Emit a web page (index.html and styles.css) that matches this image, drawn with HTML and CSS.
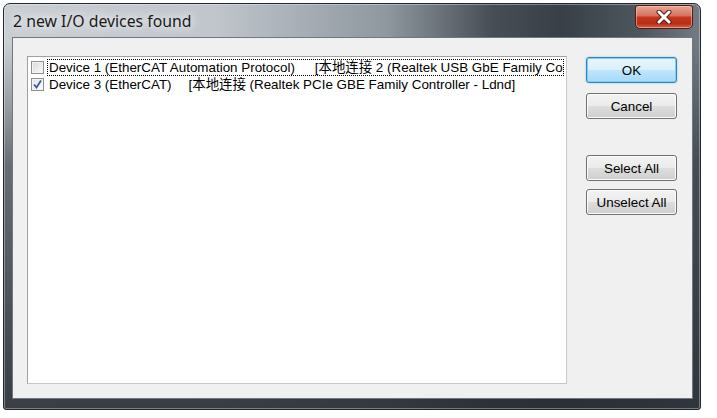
FILE: index.html
```html
<!DOCTYPE html>
<html lang="en">
<head>
    <meta charset="UTF-8">
    <title>2 new I/O devices found</title>
    <link rel="stylesheet" href="styles.css">
</head>
<body>
    <div class="window">
        <div class="titlebar">
            <span class="title">2 new I/O devices found</span>
            <button class="close" title="Close">
                <svg width="16" height="14" viewBox="0 0 16 14">
                    <path d="M3 2 L13 12 M13 2 L3 12" stroke="#5a1c12" stroke-width="5" stroke-linecap="round"/>
                    <path d="M3 2 L13 12 M13 2 L3 12" stroke="#ffffff" stroke-width="3" stroke-linecap="round"/>
                </svg>
            </button>
        </div>

        <div class="client">
            <div class="listbox">
                <div class="item">
                    <span class="check"></span>
                    <span class="label focused">
                        <span class="name">Device 1 (EtherCAT Automation Protocol)</span><span class="adapter">[本地连接 2 (Realtek USB GbE Family Controller)]</span>
                    </span>
                </div>
                <div class="item">
                    <span class="check checked">
                        <svg width="9" height="9" viewBox="0 0 9 9">
                            <path d="M1 4.5 L3.5 7.5 L8 0.5" fill="none" stroke="#3c5a9a" stroke-width="1.8"/>
                        </svg>
                    </span>
                    <span class="label">
                        <span class="name">Device 3 (EtherCAT)</span><span class="adapter short">[本地连接 (Realtek PCIe GBE Family Controller - Ldnd]</span>
                    </span>
                </div>
            </div>

            <div class="buttons">
                <button class="btn default">OK</button>
                <button class="btn cancel">Cancel</button>
                <button class="btn select">Select All</button>
                <button class="btn unselect">Unselect All</button>
            </div>
        </div>
    </div>
</body>
</html>
```

FILE: styles.css
```css
body {
    margin: 0;
    background-color: white;
    font-family: "Liberation Sans", Arial, "Noto Sans CJK SC", sans-serif;
}

.window {
    box-sizing: border-box;
    width: 698px;
    height: 407px;
    margin: 3px;
    padding: 0 7px 10px 8px;
    display: flex;
    flex-direction: column;
    border: 1px solid #20262c;
    border-radius: 7px 7px 3px 3px;
    background:
        linear-gradient(to bottom, rgba(40, 46, 52, 0) 0, rgba(40, 46, 52, 0) 40px, rgba(40, 46, 52, 0.6) 160px, rgba(40, 46, 52, 0.9) 100%),
        linear-gradient(to right, #c9ced3 0%, #c0c6cc 30%, #8f979f 55%, #474e56 70%, #383f46 80%, #4f5860 92%, #737c84 100%);
    box-shadow: inset 0 0 0 1px rgba(255, 255, 255, 0.35);
}

/* Title bar */
.titlebar {
    height: 33px;
    display: flex;
    justify-content: space-between;
    align-items: flex-start;
}

.title {
    margin: 6px 0 0 1px;
    font-family: "Noto Sans", "Open Sans", sans-serif;
    font-size: 15.8px;
    color: #1a1a1a;
    text-shadow: 0 0 8px #ffffff, 0 0 14px rgba(255, 255, 255, 0.9);
}

.close {
    width: 58px;
    height: 24px;
    margin-top: 1px;
    padding: 0;
    display: flex;
    align-items: center;
    justify-content: center;
    border: 1px solid #4a1d16;
    border-radius: 3px 3px 5px 5px;
    background: linear-gradient(to bottom, #e8a594 0%, #d8715f 45%, #c5381e 50%, #b82d15 80%, #d8604a 100%);
    box-shadow: inset 0 0 0 1px rgba(255, 210, 200, 0.5);
}

/* Client area */
.client {
    flex: 1;
    display: flex;
    align-items: flex-start;
    padding: 18px 0 0 14px;
    border: 1px solid #6f7882;
    background-color: #f0f0f0;
}

.listbox {
    box-sizing: border-box;
    width: 540px;
    height: 328px;
    padding: 2px 2px 0 3px;
    border: 1px solid #a0a0a0;
    border-right-color: #c8c8c8;
    border-bottom-color: #c8c8c8;
    background-color: white;
    overflow: hidden;
    font-size: 13.4px;
}

.item {
    height: 17px;
    display: flex;
    align-items: center;
    white-space: nowrap;
}

.check {
    box-sizing: border-box;
    flex: none;
    width: 13px;
    height: 13px;
    display: flex;
    align-items: center;
    justify-content: center;
    border: 1px solid #8e8f8f;
    background: linear-gradient(135deg, #d6d6d6 0%, #e9e9e9 50%, #fafafa 100%);
    box-shadow: inset 0 0 0 1px #f4f4f4;
}

.check.checked {
    background: linear-gradient(135deg, #dfe4ee 0%, #f1f3f7 60%, #ffffff 100%);
}

.label {
    flex: 1;
    height: 17px;
    box-sizing: border-box;
    margin-left: 3px;
    padding: 0 0 0 1px;
    border: 1px solid transparent;
    overflow: hidden;
    line-height: 15px;
    color: #000;
}

.label.focused {
    border: 1px dotted #000;
}

.adapter {
    margin-left: 20px;
}

.adapter.short {
    margin-left: 17px;
}

/* Buttons */
.buttons {
    display: flex;
    flex-direction: column;
    margin: 1px 0 0 19px;
}

.btn {
    width: 91px;
    height: 26px;
    padding: 0;
    border: 1px solid #707070;
    border-radius: 3px;
    background: linear-gradient(to bottom, #f2f2f2 0%, #ebebeb 50%, #dddddd 51%, #cfcfcf 100%);
    box-shadow: inset 0 0 0 1px #fcfcfc;
    font-family: "Liberation Sans", Arial, sans-serif;
    font-size: 13.4px;
    color: #000;
}

.btn.default {
    border-color: #3c7fb1;
    background: linear-gradient(to bottom, #eaf6fd 0%, #d9f0fc 50%, #bee6fd 51%, #a7d9f5 100%);
    box-shadow: inset 0 0 0 1px #7fd0f4, 0 0 2px #6cc4ef;
}

.btn.cancel {
    margin-top: 10px;
}

.btn.select {
    margin-top: 36px;
}

.btn.unselect {
    margin-top: 8px;
}
```
